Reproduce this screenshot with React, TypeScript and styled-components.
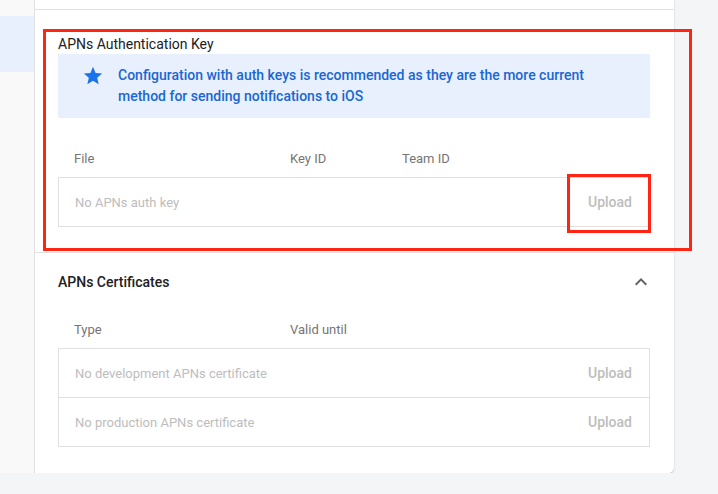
import React from "react";
import styled, { createGlobalStyle } from "styled-components";
import { MdStar, MdExpandLess } from "react-icons/md";

const Global = createGlobalStyle`
  html, body { margin: 0; padding: 0; background: #f4f5f7; }
  body { font-family: Roboto, "Noto Sans", Arial, sans-serif; -webkit-font-smoothing: antialiased; }
  * { box-sizing: border-box; }
`;

const Shell = styled.div`
  display: flex;
  width: 674px;
  height: 473px;
  box-shadow: 0 1px 2px rgba(0, 0, 0, 0.22);
  border-bottom-right-radius: 6px;
`;

const Sidebar = styled.div`
  width: 35px;
  flex: none;
  background: #f9f9f9;
  border-right: 1px solid #e0e0e0;
  padding-top: 16px;
`;

const SideActive = styled.div`
  height: 56px;
  background: #e8f0fe;
`;

const Card = styled.div`
  flex: 1;
  background: #fff;
  border-bottom-right-radius: 6px;
  padding-top: 9px;
  display: flex;
  flex-direction: column;
`;

const Section = styled.section<{ $top: number; $bottom: number }>`
  position: relative;
  border-top: 1px solid #e0e0e0;
  padding: ${(p) => p.$top}px 24px ${(p) => p.$bottom}px 23px;
`;

const Highlight = styled.div`
  position: absolute;
  left: 8px;
  top: 19px;
  width: 649px;
  height: 222px;
  border: 3px solid #ff2414;
  pointer-events: none;
`;

const TitleRow = styled.div`
  display: flex;
  align-items: center;
  justify-content: space-between;
  height: 20px;
`;

const Title = styled.h3<{ $weight: number }>`
  margin: 0;
  font-size: 14px;
  line-height: 20px;
  font-weight: ${(p) => p.$weight};
  color: #212121;
`;

const Chevron = styled.span`
  display: flex;
  color: #616161;
  margin-right: -3px;
`;

const Info = styled.div`
  display: flex;
  align-items: flex-start;
  background: #e8f0fe;
  padding: 11px 16px 11px 24px;
  gap: 14px;
`;

const InfoIcon = styled.span`
  display: flex;
  color: #1a73e8;
`;

const InfoText = styled.p`
  margin: 0;
  font-size: 14px;
  line-height: 21px;
  font-weight: 500;
  color: #1967d2;
`;

const Headers = styled.div<{ $mt: number }>`
  display: grid;
  grid-template-columns: 216px 112px 1fr;
  align-items: center;
  height: 38px;
  margin-top: ${(p) => p.$mt}px;
  padding-left: 16px;
  font-size: 13px;
  color: #757575;
`;

const Table = styled.div`
  border: 1px solid #e0e0e0;
`;

const Row = styled.div`
  position: relative;
  display: flex;
  align-items: center;
  justify-content: space-between;
  height: 48px;
  padding: 0 17px 0 16px;
  & + & {
    border-top: 1px solid #e0e0e0;
    height: 49px;
  }
`;

const Empty = styled.span`
  font-size: 13px;
  color: #bdbdbd;
`;

const Upload = styled.button`
  border: none;
  background: none;
  padding: 0;
  font-family: inherit;
  font-size: 14px;
  font-weight: 500;
  color: #bdbdbd;
  cursor: default;
`;

const UploadMark = styled.div`
  position: absolute;
  right: -2px;
  top: -4px;
  width: 84px;
  height: 59px;
  border: 3px solid #ff2414;
  pointer-events: none;
`;

export default function App() {
  return (
    <>
      <Global />
      <Shell>
        <Sidebar>
          <SideActive />
        </Sidebar>
        <Card>
          <Section $top={24} $bottom={25}>
            <Highlight />
            <TitleRow>
              <Title $weight={400}>APNs Authentication Key</Title>
            </TitleRow>
            <Info>
              <InfoIcon>
                <MdStar size={22} />
              </InfoIcon>
              <InfoText>
                Configuration with auth keys is recommended as they are the more current
                <br />
                method for sending notifications to iOS
              </InfoText>
            </Info>
            <Headers $mt={21}>
              <span>File</span>
              <span>Key ID</span>
              <span>Team ID</span>
            </Headers>
            <Table>
              <Row>
                <Empty>No APNs auth key</Empty>
                <Upload>Upload</Upload>
                <UploadMark />
              </Row>
            </Table>
          </Section>
          <Section $top={19} $bottom={25}>
            <TitleRow>
              <Title $weight={500}>APNs Certificates</Title>
              <Chevron>
                <MdExpandLess size={24} />
              </Chevron>
            </TitleRow>
            <Headers $mt={18}>
              <span>Type</span>
              <span>Valid until</span>
              <span />
            </Headers>
            <Table>
              <Row>
                <Empty>No development APNs certificate</Empty>
                <Upload>Upload</Upload>
              </Row>
              <Row>
                <Empty>No production APNs certificate</Empty>
                <Upload>Upload</Upload>
              </Row>
            </Table>
          </Section>
        </Card>
      </Shell>
    </>
  );
}
